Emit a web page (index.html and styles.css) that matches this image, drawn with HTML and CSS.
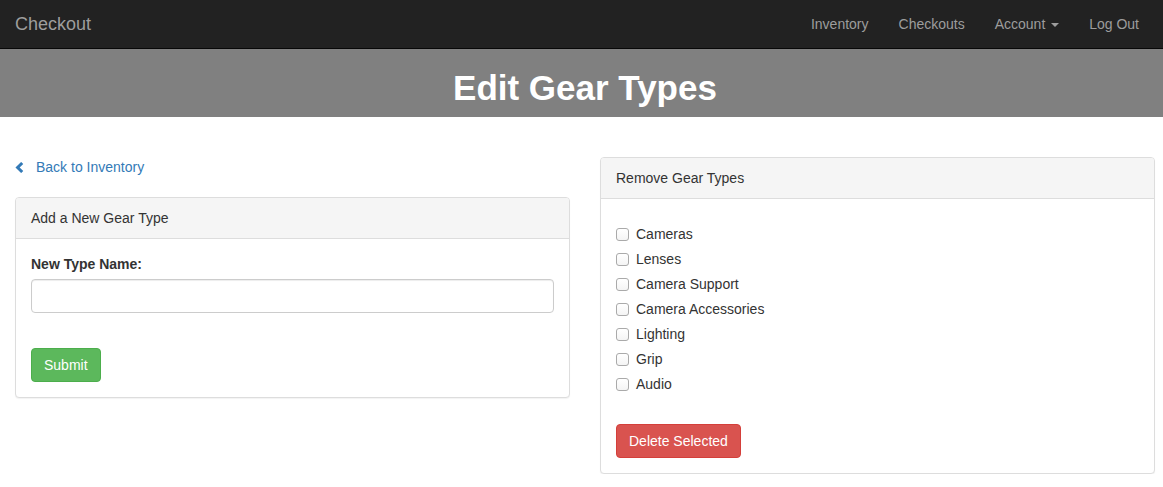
FILE: index.html
```html
<!DOCTYPE html>
<html lang="en">
<head>
<meta charset="utf-8">
<title>Edit Gear Types</title>
<link rel="stylesheet" href="styles.css">
</head>
<body>
<nav class="navbar">
  <a class="brand" href="#">Checkout</a>
  <ul class="nav">
    <li><a href="#">Inventory</a></li>
    <li><a href="#">Checkouts</a></li>
    <li><a href="#">Account <span class="caret"></span></a></li>
    <li><a href="#">Log Out</a></li>
  </ul>
</nav>
<header class="band">
  <h1 class="title">Edit Gear Types</h1>
</header>
<main class="content">
  <section class="col">
    <a class="back" href="#">
      <svg class="chev" width="9" height="11" viewBox="0 0 9 11" aria-hidden="true"><path d="M7.2 1 L2.6 5.5 L7.2 10" fill="none" stroke="#337ab7" stroke-width="3"/></svg>
      <span>Back to Inventory</span>
    </a>
    <div class="panel">
      <div class="panel-heading">Add a New Gear Type</div>
      <div class="panel-body">
        <div class="form-group">
          <label class="control-label" for="typename">New Type Name:</label>
          <input class="form-control" id="typename" type="text">
        </div>
        <button class="btn btn-success" type="button">Submit</button>
      </div>
    </div>
  </section>
  <section class="col col-right">
    <div class="panel">
      <div class="panel-heading">Remove Gear Types</div>
      <div class="panel-body">
        <div class="checks">
          <label class="check"><input type="checkbox"><span>Cameras</span></label>
          <label class="check"><input type="checkbox"><span>Lenses</span></label>
          <label class="check"><input type="checkbox"><span>Camera Support</span></label>
          <label class="check"><input type="checkbox"><span>Camera Accessories</span></label>
          <label class="check"><input type="checkbox"><span>Lighting</span></label>
          <label class="check"><input type="checkbox"><span>Grip</span></label>
          <label class="check"><input type="checkbox"><span>Audio</span></label>
        </div>
        <button class="btn btn-danger" type="button">Delete Selected</button>
      </div>
    </div>
  </section>
</main>
</body>
</html>
```
FILE: styles.css
```css
* { box-sizing: border-box; }
html, body { margin: 0; padding: 0; }
body {
  font-family: "Liberation Sans", Arial, sans-serif;
  font-size: 14px;
  line-height: 20px;
  color: #333;
  background: #fff;
}
a { text-decoration: none; }

.navbar {
  height: 49px;
  background: #222;
  border-bottom: 1px solid #080808;
  display: flex;
  align-items: center;
  justify-content: space-between;
  padding: 0 9px 1px 15px;
}
.brand {
  font-size: 18px;
  line-height: 20px;
  color: #9d9d9d;
}
.nav {
  list-style: none;
  margin: 0;
  padding: 0;
  display: flex;
}
.nav a {
  display: block;
  padding: 0 15px;
  line-height: 20px;
  color: #9d9d9d;
}
.nav li:first-child a { padding-left: 16px; }
.caret {
  display: inline-block;
  width: 0;
  height: 0;
  margin-left: 2px;
  vertical-align: middle;
  border-top: 4px solid #9d9d9d;
  border-left: 4px solid transparent;
  border-right: 4px solid transparent;
}

.band {
  height: 68px;
  background: #808080;
  padding: 20px 0 0 7px;
}
.title {
  margin: 0;
  text-align: center;
  color: #fff;
  font-size: 35px;
  font-weight: bold;
  line-height: 38.5px;
}

.content {
  display: flex;
  gap: 30px;
  padding: 0 15px;
  margin-top: 40px;
}
.col { width: 555px; flex: none; }

.back {
  display: flex;
  align-items: center;
  height: 20px;
  margin-bottom: 20px;
  color: #337ab7;
  padding-left: 0;
}
.chev { margin-right: 12px; margin-top: 1px; }

.panel {
  border: 1px solid #ddd;
  border-radius: 4px;
  background: #fff;
  box-shadow: 0 1px 1px rgba(0,0,0,.05);
}
.panel-heading {
  padding: 10px 15px;
  background: #f5f5f5;
  border-bottom: 1px solid #ddd;
  border-radius: 3px 3px 0 0;
  color: #333;
}
.panel-body { padding: 15px; }

.form-group { margin-bottom: 15px; }
.control-label {
  display: block;
  font-weight: bold;
  margin-bottom: 5px;
}
.form-control {
  display: block;
  width: 100%;
  height: 34px;
  padding: 6px 12px;
  font: inherit;
  color: #555;
  background: #fff;
  border: 1px solid #ccc;
  border-radius: 4px;
  box-shadow: inset 0 1px 1px rgba(0,0,0,.075);
}

.btn {
  display: inline-block;
  margin-top: 20px;
  padding: 6px 12px;
  font-family: inherit;
  font-size: 14px;
  line-height: 20px;
  color: #fff;
  border: 1px solid transparent;
  border-radius: 4px;
  cursor: pointer;
}
.btn-success { background: #5cb85c; border-color: #4cae4c; }
.btn-danger { background: #d9534f; border-color: #d43f3a; }

.checks {
  display: flex;
  flex-direction: column;
  gap: 5px;
  margin: 10px 0;
}
.check {
  display: flex;
  align-items: center;
  height: 20px;
  gap: 7px;
  cursor: pointer;
}
.check input {
  appearance: none;
  -webkit-appearance: none;
  width: 13px;
  height: 13px;
  margin: 1px 0 0 0;
  border: 1px solid #aaa;
  border-radius: 3px;
  background: linear-gradient(#fff, #f4f4f4);
  flex: none;
}
```
